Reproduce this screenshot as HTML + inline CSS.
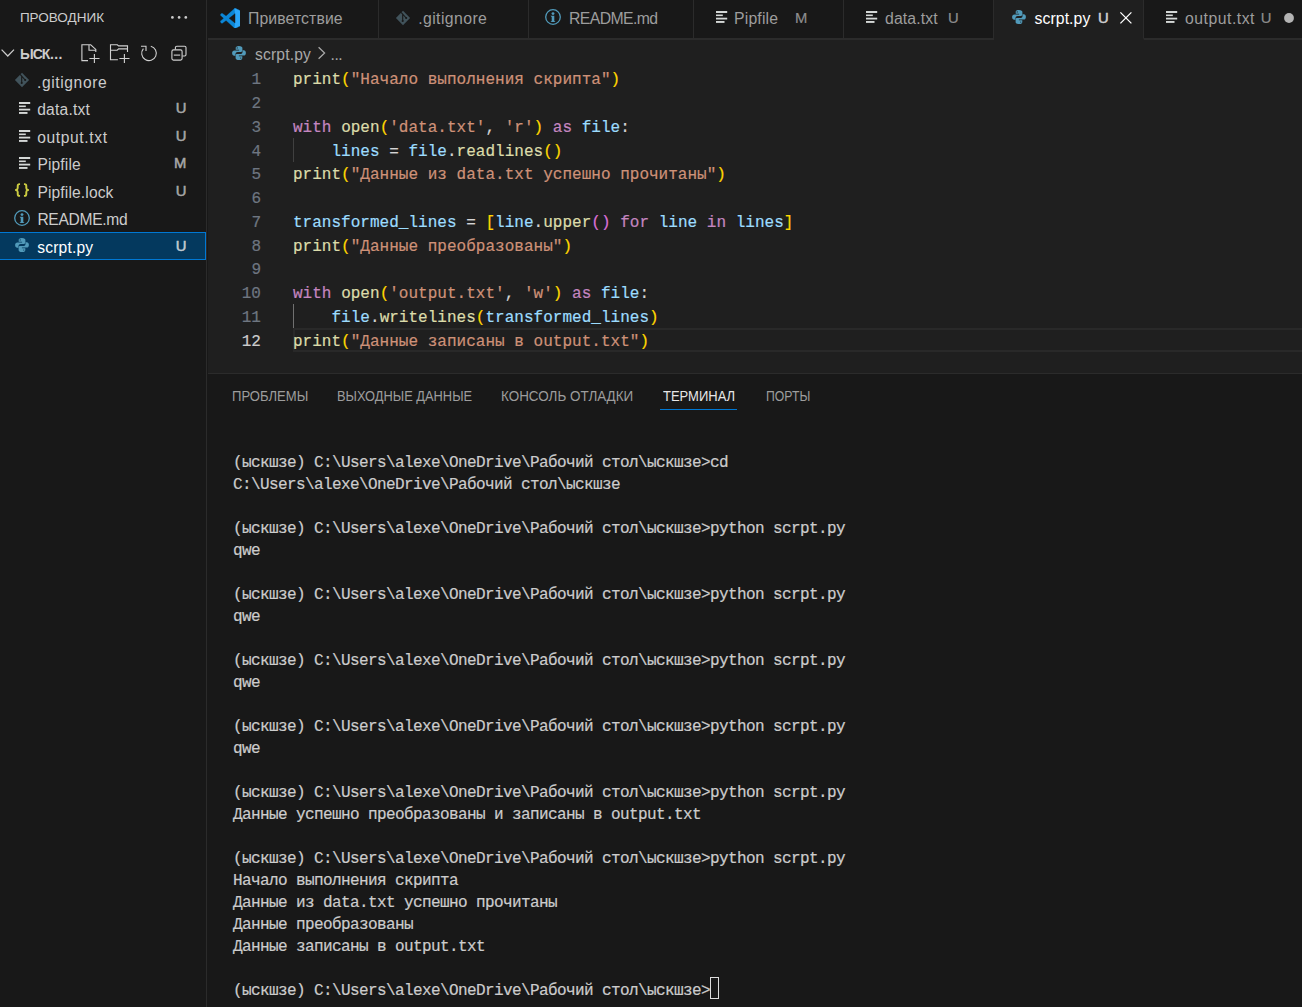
<!DOCTYPE html>
<html lang="ru">
<head>
<meta charset="utf-8">
<title>scrpt.py — ыскшзе — Visual Studio Code</title>
<style>
*{box-sizing:border-box;margin:0;padding:0}
html,body{width:1302px;height:1007px;overflow:hidden;background:#181818}
body{position:relative;font-family:"Liberation Sans",sans-serif;color:#ccc;font-size:16.25px}
.abs{position:absolute}
#side{position:absolute;left:0;top:0;width:207px;height:1007px;background:#181818;border-right:1px solid #2b2b2b}
#side .title{position:absolute;left:19.9px;top:9.4px;font-size:13.5px;line-height:18px;color:#ccc;letter-spacing:0px;white-space:nowrap}
#side .sect{position:absolute;left:20px;top:44.8px;font-size:14px;letter-spacing:-1px;font-weight:bold;line-height:18px;color:#ccc;white-space:nowrap}
.row{position:absolute;left:0;width:206px;height:27.5px;line-height:27.5px}
.row .nm{position:absolute;left:37px;top:1.5px;font-size:15.6px;color:#ccc;white-space:nowrap}
.row .bd{position:absolute;right:19.6px;top:.6px;font-size:14.8px;color:#a8a8a8;-webkit-text-stroke:.5px #a8a8a8;text-align:center}
.row.sel{background:#04395e;box-shadow:inset 0 1px #0078d4,inset 0 -1px #0078d4,inset -1px 0 #0078d4;height:28px}
.row.sel .nm{color:#fff}
.row.sel .bd{color:#c4ccd2;-webkit-text-stroke-color:#c4ccd2}
#tabs{position:absolute;left:208px;top:0;width:1094px;height:40px;background:#181818;border-bottom:2px solid #2b2b2b;z-index:2}
.tab{position:absolute;top:0;height:40px;border-right:1px solid #2b2b2b;line-height:34px;font-size:15.8px;color:#9d9d9d;white-space:nowrap;border-bottom:2px solid #2b2b2b}
.tab.act{background:#1f1f1f;color:#fff;border-bottom:2px solid #1f1f1f}
.tab .lb,.tab .tb{position:absolute;top:1.8px}
.tab .tb{font-size:14.8px;top:.7px !important;margin-left:-.6px;color:#8e8e8e;-webkit-text-stroke:.2px #8e8e8e}
.tab.act .tb{color:#d0d0d0;-webkit-text-stroke:.5px #d0d0d0}
#ed{position:absolute;left:208px;top:39px;width:1094px;height:334px;background:#1f1f1f}
#bc{position:absolute;left:0;top:0;height:27.5px;line-height:28px;font-size:15.6px;color:#a9a9a9;white-space:nowrap}
#bc span{top:1.9px}
.ln{position:absolute;left:0;width:1094px;height:23.75px;line-height:23.75px;font-family:"Liberation Mono","DejaVu Sans Mono",monospace;font-size:16px;letter-spacing:0.02px;white-space:pre;-webkit-text-stroke:.2px}
.ln .n{position:absolute;left:0;top:2.9px;width:53px;text-align:right;color:#6e7681}
.ln .c{position:absolute;left:85px;top:2.9px;color:#d4d4d4}
.curline{position:absolute;left:85px;width:1012px;height:24px;border:2px solid #292929}
.ln.cur .n{color:#ccc}
.f{color:#dcdcaa}.s{color:#ce9178}.k{color:#c586c0}.v{color:#9cdcfe}.b1{color:#ffd700}.b2{color:#da70d6}
.guide{position:absolute;left:85px;width:1.25px;background:#404040}
#panel{position:absolute;left:208px;top:373px;width:1094px;height:634px;background:#181818;border-top:1px solid #2b2b2b}
.pt{position:absolute;display:inline-block;transform-origin:0 0;top:13.3px;font-size:14px;line-height:18px;color:#9d9d9d;white-space:nowrap}
.pt.act{color:#e7e7e7}
.ul{position:absolute;left:452px;width:77px;top:35px;height:1px;background:#0078d4}
.tl{position:absolute;left:25px;height:22px;line-height:24px;padding-top:1.6px;font-family:"Liberation Mono","DejaVu Sans Mono",monospace;font-size:16px;letter-spacing:-0.602px;color:#ccc;white-space:pre;-webkit-text-stroke:.2px}
.cursor{position:absolute;top:0;width:9px;height:22px;border:1px solid #dcdcdc;margin-left:.3px}

</style>
</head>
<body>
<div id="side">
<div class="title">ПРОВОДНИК</div>
<svg class="abs" style="left:170px;top:14px" width="18" height="6" viewBox="0 0 18 6" fill="#ccc"><circle cx="2.4" cy="3.4" r="1.35"/><circle cx="9.1" cy="3.4" r="1.35"/><circle cx="15.8" cy="3.4" r="1.35"/></svg>
<svg class="abs" style="left:0px;top:48.4px" width="16" height="10" viewBox="0 0 16 10"><path d="M1.6 1.6 7.8 8 14 1.6" fill="none" stroke="#ccc" stroke-width="1.25"/></svg>
<div class="sect">ЫСК<span style="letter-spacing:.45px;margin-left:.5px">...</span></div>
<svg class="abs" style="left:76px;top:38px" width="118" height="30" viewBox="76 38 118 30" fill="none" stroke="#d0d0d0" stroke-width="1.12"><path d="M88 60.6H81.9V44.8H90.7L95.8 49.4V51.9M89 44.8V50.2H95.8"/><path d="M89.4 58.5H99.5M94.4 53.9V63.1"/><path d="M117.9 59.8H110.5V44.8H117.3L118.6 45.9H127.5V51.9M110.5 50.2H117.2L118.6 48.9H127.5"/><path d="M119.4 58.5H129.5M124.4 53.9V63.1"/><path d="M150.8 46.2A7.3 7.3 0 1 1 143.4 48.6"/><path d="M141 46.2H146V51"/><rect x="171.9" y="49.9" width="10.2" height="10.2" rx="1.6"/><path d="M173.8 55.1H180.2" /><path d="M175.4 49.6V47.6Q175.4 46.2 176.8 46.2H184.6Q186 46.2 186 47.6V54.6Q186 56 184.6 56H182.4"/></svg>
<div class="row" style="top:67.25px"><svg class="abs" style="left:13.8px;top:5px" width="16" height="16" viewBox="-8 -8 16 16"><path d="M0-7.2 7.1 0 0 7.2-7.1 0Z" fill="#41535b"/><path d="M-1.9-5.6 3.2 0M-.3-3.6V3" stroke="#181818" stroke-width="1.1" fill="none"/><circle cx="3.2" cy="0" r="1.05" fill="#181818"/><circle cx="-.3" cy="3" r="1.05" fill="#181818"/></svg><span class="nm" style="left:37.0px;letter-spacing:0.611px">.gitignore</span></div>
<div class="row" style="top:94.75px"><svg class="abs" style="left:19px;top:7.4px" width="12" height="13" viewBox="0 0 12 13"><rect x="0" y="0" width="11.2" height="2" fill="#d4d7d6"/><rect x="0" y="3.5" width="6.8" height="1.6" fill="#d4d7d6"/><rect x="0" y="6.7" width="11.2" height="1.8" fill="#d4d7d6"/><rect x="0" y="10" width="8.5" height="1.9" fill="#d4d7d6"/></svg><span class="nm" style="left:37.2px;letter-spacing:0.214px">data.txt</span><span class="bd">U</span></div>
<div class="row" style="top:122.25px"><svg class="abs" style="left:19px;top:7.4px" width="12" height="13" viewBox="0 0 12 13"><rect x="0" y="0" width="11.2" height="2" fill="#d4d7d6"/><rect x="0" y="3.5" width="6.8" height="1.6" fill="#d4d7d6"/><rect x="0" y="6.7" width="11.2" height="1.8" fill="#d4d7d6"/><rect x="0" y="10" width="8.5" height="1.9" fill="#d4d7d6"/></svg><span class="nm" style="left:37.2px;letter-spacing:0.632px">output.txt</span><span class="bd">U</span></div>
<div class="row" style="top:149.75px"><svg class="abs" style="left:19px;top:7.4px" width="12" height="13" viewBox="0 0 12 13"><rect x="0" y="0" width="11.2" height="2" fill="#d4d7d6"/><rect x="0" y="3.5" width="6.8" height="1.6" fill="#d4d7d6"/><rect x="0" y="6.7" width="11.2" height="1.8" fill="#d4d7d6"/><rect x="0" y="10" width="8.5" height="1.9" fill="#d4d7d6"/></svg><span class="nm" style="left:37.4px;letter-spacing:0.132px">Pipfile</span><span class="bd">M</span></div>
<div class="row" style="top:177.25px"><svg class="abs" style="left:14.6px;top:5.4px" width="14.6" height="14.2" viewBox="0 0 15 15" preserveAspectRatio="none"><path d="M5.2 1.2H4.6C3.2 1.2 2.8 2 2.8 3.2V5.4C2.8 6.6 2.2 7.2 .9 7.4C2.2 7.6 2.8 8.2 2.8 9.4V11.6C2.8 12.8 3.2 13.6 4.6 13.6H5.2" fill="none" stroke="#cbcb41" stroke-width="2" stroke-linejoin="round"/><path d="M9.2 1.2H9.8C11.2 1.2 11.6 2 11.6 3.2V5.4C11.6 6.6 12.2 7.2 13.5 7.4C12.2 7.6 11.6 8.2 11.6 9.4V11.6C11.6 12.8 11.2 13.6 9.8 13.6H9.2" fill="none" stroke="#cbcb41" stroke-width="2" stroke-linejoin="round"/></svg><span class="nm" style="left:37.4px;letter-spacing:0.136px">Pipfile.lock</span><span class="bd">U</span></div>
<div class="row" style="top:204.75px"><svg class="abs" style="left:12.9px;top:4.2px" width="18" height="18" viewBox="-9 -9 18 18"><circle cx="0" cy="0" r="7.3" fill="none" stroke="#519aba" stroke-width="1.3"/><circle cx="0" cy="-3.4" r="1.45" fill="#519aba"/><path d="M-2.6-1.2H1.3V3.9L2.6 5H-2.6L-1.3 3.9V0Z" fill="#519aba"/></svg><span class="nm" style="left:37.4px;letter-spacing:-0.3px">README.md</span></div>
<div class="row sel" style="top:232px"><svg class="abs" style="left:14px;top:5px" width="16" height="16" viewBox="-8 -8 16 16"><path d="M-.2-7C-2.6-7-3.3-6-3.3-4.9V-3.2H.1V-2.6H-4.6C-6-2.6-6.9-1.5-6.9.1C-6.9 1.8-6 2.8-4.8 2.8H-3.5V1.1C-3.5-.2-2.5-1.1-1.3-1.1H1.9C2.8-1.1 3.4-1.8 3.4-2.7V-4.9C3.4-6 2.4-7-.2-7Z" fill="#519aba"/><path d="M.2 7C2.6 7 3.3 6 3.3 4.9V3.2H-.1V2.6H4.6C6 2.6 6.9 1.5 6.9-.1C6.9-1.8 6-2.8 4.8-2.8H3.5V-1.1C3.5.2 2.5 1.1 1.3 1.1H-1.9C-2.8 1.1-3.4 1.8-3.4 2.7V4.9C-3.4 6-2.4 7 .2 7Z" fill="#519aba"/><circle cx="-1.8" cy="-5.1" r=".55" fill="#04395e"/><circle cx="1.8" cy="5.1" r=".55" fill="#04395e"/></svg><span class="nm" style="left:37.2px;letter-spacing:0.189px">scrpt.py</span><span class="bd">U</span></div>
</div>
<div id="tabs">
<div class="tab" style="left:0px;width:171px"><svg class="abs" style="left:11.7px;top:7.7px" width="20.6" height="20.6" viewBox="0 0 100 100"><path d="M70.9 99.3C72.5 99.9 74.3 99.9 75.9 99.1L96.5 89.2C98.6 88.2 100 86 100 83.6V16.4C100 14 98.6 11.8 96.5 10.8L75.9.9C73.8-.1 71.3.1 69.5 1.4C69.3 1.6 69 1.8 68.8 2.1L29.4 38 12.2 25C10.6 23.8 8.4 23.9 6.9 25.2L1.4 30.3C-.5 31.9-.5 34.8 1.4 36.4L16.2 50 1.4 63.6C-.5 65.2-.5 68.1 1.4 69.7L6.9 74.8C8.4 76.1 10.6 76.2 12.2 75L29.4 62 68.8 97.9C69.4 98.5 70.1 99 70.9 99.3ZM73 27.5 44.5 50 73 72.5V27.5Z" fill="#0b86d6" fill-rule="evenodd"/><path d="M70 .6 75.9.9 96.5 10.8C98.6 11.8 100 14 100 16.4V83.6C100 86 98.6 88.2 96.5 89.2L75.9 99.1 70 99.4 73 72.5V27.5Z" fill="#2aa7fb"/><path d="M70.9 99.3C72.5 99.9 74.3 99.9 75.9 99.1L96.5 89.2C98.6 88.2 100 86 100 83.6V16.4C100 14 98.6 11.8 96.5 10.8L75.9.9C73.8-.1 71.3.1 69.5 1.4C69.3 1.6 69 1.8 68.8 2.1L29.4 38 12.2 25C10.6 23.8 8.4 23.9 6.9 25.2L1.4 30.3C-.5 31.9-.5 34.8 1.4 36.4L16.2 50 1.4 63.6C-.5 65.2-.5 68.1 1.4 69.7L6.9 74.8C8.4 76.1 10.6 76.2 12.2 75L29.4 62 68.8 97.9C69.4 98.5 70.1 99 70.9 99.3ZM73 27.5 44.5 50 73 72.5V27.5Z" fill="none" stroke="#181818" stroke-width="2"/></svg><span class="lb" style="left:40.0px;letter-spacing:0.1px">Приветствие</span></div>
<div class="tab" style="left:171px;width:150px"><svg class="abs" style="left:16.4px;top:9.6px" width="16" height="16" viewBox="-8 -8 16 16"><path d="M0-7.2 7.1 0 0 7.2-7.1 0Z" fill="#41535b"/><path d="M-1.9-5.6 3.2 0M-.3-3.6V3" stroke="#181818" stroke-width="1.1" fill="none"/><circle cx="3.2" cy="0" r="1.05" fill="#181818"/><circle cx="-.3" cy="3" r="1.05" fill="#181818"/></svg><span class="lb" style="left:39.2px;letter-spacing:0.415px">.gitignore</span></div>
<div class="tab" style="left:321px;width:165px"><svg class="abs" style="left:15px;top:8.2px" width="18" height="18" viewBox="-9 -9 18 18"><circle cx="0" cy="0" r="7.3" fill="none" stroke="#519aba" stroke-width="1.3"/><circle cx="0" cy="-3.4" r="1.45" fill="#519aba"/><path d="M-2.6-1.2H1.3V3.9L2.6 5H-2.6L-1.3 3.9V0Z" fill="#519aba"/></svg><span class="lb" style="left:40.0px;letter-spacing:-0.6px">README.md</span></div>
<div class="tab" style="left:486px;width:150px"><svg class="abs" style="left:22px;top:11.4px" width="12" height="13" viewBox="0 0 12 13"><rect x="0" y="0" width="11.2" height="2" fill="#d4d7d6"/><rect x="0" y="3.5" width="6.8" height="1.6" fill="#d4d7d6"/><rect x="0" y="6.7" width="11.2" height="1.8" fill="#d4d7d6"/><rect x="0" y="10" width="8.5" height="1.9" fill="#d4d7d6"/></svg><span class="lb" style="left:40.0px;letter-spacing:0.167px">Pipfile</span><span class="tb" style="left:101.5px">M</span></div>
<div class="tab" style="left:636px;width:150px"><svg class="abs" style="left:21.8px;top:11.4px" width="12" height="13" viewBox="0 0 12 13"><rect x="0" y="0" width="11.2" height="2" fill="#d4d7d6"/><rect x="0" y="3.5" width="6.8" height="1.6" fill="#d4d7d6"/><rect x="0" y="6.7" width="11.2" height="1.8" fill="#d4d7d6"/><rect x="0" y="10" width="8.5" height="1.9" fill="#d4d7d6"/></svg><span class="lb" style="left:41.0px;letter-spacing:0.128px">data.txt</span><span class="tb" style="left:104.6px">U</span></div>
<div class="tab act" style="left:786px;width:150px"><svg class="abs" style="left:17px;top:9.4px" width="16" height="16" viewBox="-8 -8 16 16"><path d="M-.2-7C-2.6-7-3.3-6-3.3-4.9V-3.2H.1V-2.6H-4.6C-6-2.6-6.9-1.5-6.9.1C-6.9 1.8-6 2.8-4.8 2.8H-3.5V1.1C-3.5-.2-2.5-1.1-1.3-1.1H1.9C2.8-1.1 3.4-1.8 3.4-2.7V-4.9C3.4-6 2.4-7-.2-7Z" fill="#519aba"/><path d="M.2 7C2.6 7 3.3 6 3.3 4.9V3.2H-.1V2.6H4.6C6 2.6 6.9 1.5 6.9-.1C6.9-1.8 6-2.8 4.8-2.8H3.5V-1.1C3.5.2 2.5 1.1 1.3 1.1H-1.9C-2.8 1.1-3.4 1.8-3.4 2.7V4.9C-3.4 6-2.4 7 .2 7Z" fill="#519aba"/><circle cx="-1.8" cy="-5.1" r=".55" fill="#1f1f1f"/><circle cx="1.8" cy="5.1" r=".55" fill="#1f1f1f"/></svg><span class="lb" style="left:40.5px;letter-spacing:0.072px">scrpt.py</span><span class="tb" style="left:104.5px">U</span><svg class="abs" style="left:125.2px;top:10.6px" width="14" height="14" viewBox="0 0 14 14"><path d="M1.4 1.4 12.4 12.4M12.4 1.4 1.4 12.4" stroke="#fff" stroke-width="1.3" fill="none"/></svg></div>
<div class="tab" style="left:936px;width:170px"><svg class="abs" style="left:21.8px;top:11.4px" width="12" height="13" viewBox="0 0 12 13"><rect x="0" y="0" width="11.2" height="2" fill="#d4d7d6"/><rect x="0" y="3.5" width="6.8" height="1.6" fill="#d4d7d6"/><rect x="0" y="6.7" width="11.2" height="1.8" fill="#d4d7d6"/><rect x="0" y="10" width="8.5" height="1.9" fill="#d4d7d6"/></svg><span class="lb" style="left:41.0px;letter-spacing:0.5px">output.txt</span><span class="tb" style="left:117.3px">U</span><svg class="abs" style="left:139px;top:12px" width="12" height="12" viewBox="0 0 12 12"><circle cx="6" cy="6" r="4.9" fill="#b4b4b4"/></svg></div>
</div>
<div id="ed">
<div id="bc"><svg class="abs" style="left:23.4px;top:5.7px" width="16" height="16" viewBox="-8 -8 16 16"><path d="M-.2-7C-2.6-7-3.3-6-3.3-4.9V-3.2H.1V-2.6H-4.6C-6-2.6-6.9-1.5-6.9.1C-6.9 1.8-6 2.8-4.8 2.8H-3.5V1.1C-3.5-.2-2.5-1.1-1.3-1.1H1.9C2.8-1.1 3.4-1.8 3.4-2.7V-4.9C3.4-6 2.4-7-.2-7Z" fill="#519aba"/><path d="M.2 7C2.6 7 3.3 6 3.3 4.9V3.2H-.1V2.6H4.6C6 2.6 6.9 1.5 6.9-.1C6.9-1.8 6-2.8 4.8-2.8H3.5V-1.1C3.5.2 2.5 1.1 1.3 1.1H-1.9C-2.8 1.1-3.4 1.8-3.4 2.7V4.9C-3.4 6-2.4 7 .2 7Z" fill="#519aba"/><circle cx="-1.8" cy="-5.1" r=".55" fill="#1f1f1f"/><circle cx="1.8" cy="5.1" r=".55" fill="#1f1f1f"/></svg><span class="abs" style="left:47px;letter-spacing:0.189px">scrpt.py</span><svg class="abs" style="left:108.6px;top:7.2px" width="10" height="14" viewBox="0 0 10 14"><path d="M1.6 1.2 7.6 7 1.6 12.8" fill="none" stroke="#a9a9a9" stroke-width="1.25"/></svg><span class="abs" style="left:122.6px;letter-spacing:-.5px">...</span></div>
<div class="curline" style="top:289px"></div>
<div class="ln" style="top:27.5px"><span class="n">1</span><span class="c"><span class="f">print</span><span class="b1">(</span><span class="s">"Начало выполнения скрипта"</span><span class="b1">)</span></span></div>
<div class="ln" style="top:51.25px"><span class="n">2</span></div>
<div class="ln" style="top:75.0px"><span class="n">3</span><span class="c"><span class="k">with</span> <span class="f">open</span><span class="b1">(</span><span class="s">'data.txt'</span>, <span class="s">'r'</span><span class="b1">)</span> <span class="k">as</span> <span class="v">file</span>:</span></div>
<div class="ln" style="top:98.75px"><span class="n">4</span><span class="c">    <span class="v">lines</span> = <span class="v">file</span>.<span class="f">readlines</span><span class="b1">()</span></span></div>
<div class="ln" style="top:122.5px"><span class="n">5</span><span class="c"><span class="f">print</span><span class="b1">(</span><span class="s">"Данные из data.txt успешно прочитаны"</span><span class="b1">)</span></span></div>
<div class="ln" style="top:146.25px"><span class="n">6</span></div>
<div class="ln" style="top:170.0px"><span class="n">7</span><span class="c"><span class="v">transformed_lines</span> = <span class="b1">[</span><span class="v">line</span>.<span class="f">upper</span><span class="b2">()</span> <span class="k">for</span> <span class="v">line</span> <span class="k">in</span> <span class="v">lines</span><span class="b1">]</span></span></div>
<div class="ln" style="top:193.75px"><span class="n">8</span><span class="c"><span class="f">print</span><span class="b1">(</span><span class="s">"Данные преобразованы"</span><span class="b1">)</span></span></div>
<div class="ln" style="top:217.5px"><span class="n">9</span></div>
<div class="ln" style="top:241.25px"><span class="n">10</span><span class="c"><span class="k">with</span> <span class="f">open</span><span class="b1">(</span><span class="s">'output.txt'</span>, <span class="s">'w'</span><span class="b1">)</span> <span class="k">as</span> <span class="v">file</span>:</span></div>
<div class="ln" style="top:265.0px"><span class="n">11</span><span class="c">    <span class="v">file</span>.<span class="f">writelines</span><span class="b1">(</span><span class="v">transformed_lines</span><span class="b1">)</span></span></div>
<div class="ln cur" style="top:288.75px"><span class="n">12</span><span class="c"><span class="f">print</span><span class="b1">(</span><span class="s">"Данные записаны в output.txt"</span><span class="b1">)</span></span></div>
<div class="guide" style="top:98.75px;height:23.75px"></div>
<div class="guide" style="top:265.0px;height:24.0px;background:#707070"></div>
</div>
<div id="panel">
<span class="pt" style="left:24.1px;transform:scaleX(0.9326)">ПРОБЛЕМЫ</span>
<span class="pt" style="left:128.9px;transform:scaleX(0.9178)">ВЫХОДНЫЕ ДАННЫЕ</span>
<span class="pt" style="left:292.9px;transform:scaleX(0.9609)">КОНСОЛЬ ОТЛАДКИ</span>
<span class="pt act" style="left:454.7px;transform:scaleX(0.9276)">ТЕРМИНАЛ</span>
<span class="pt" style="left:557.6px;transform:scaleX(0.8735)">ПОРТЫ</span>
<div class="ul"></div>
<div class="tl" style="top:75px">(ыскшзе) C:\Users\alexe\OneDrive\Рабочий стол\ыскшзе&gt;cd</div>
<div class="tl" style="top:97px">C:\Users\alexe\OneDrive\Рабочий стол\ыскшзе</div>
<div class="tl" style="top:141px">(ыскшзе) C:\Users\alexe\OneDrive\Рабочий стол\ыскшзе&gt;python scrpt.py</div>
<div class="tl" style="top:163px">qwe</div>
<div class="tl" style="top:207px">(ыскшзе) C:\Users\alexe\OneDrive\Рабочий стол\ыскшзе&gt;python scrpt.py</div>
<div class="tl" style="top:229px">qwe</div>
<div class="tl" style="top:273px">(ыскшзе) C:\Users\alexe\OneDrive\Рабочий стол\ыскшзе&gt;python scrpt.py</div>
<div class="tl" style="top:295px">qwe</div>
<div class="tl" style="top:339px">(ыскшзе) C:\Users\alexe\OneDrive\Рабочий стол\ыскшзе&gt;python scrpt.py</div>
<div class="tl" style="top:361px">qwe</div>
<div class="tl" style="top:405px">(ыскшзе) C:\Users\alexe\OneDrive\Рабочий стол\ыскшзе&gt;python scrpt.py</div>
<div class="tl" style="top:427px">Данные успешно преобразованы и записаны в output.txt</div>
<div class="tl" style="top:471px">(ыскшзе) C:\Users\alexe\OneDrive\Рабочий стол\ыскшзе&gt;python scrpt.py</div>
<div class="tl" style="top:493px">Начало выполнения скрипта</div>
<div class="tl" style="top:515px">Данные из data.txt успешно прочитаны</div>
<div class="tl" style="top:537px">Данные преобразованы</div>
<div class="tl" style="top:559px">Данные записаны в output.txt</div>
<div class="tl" style="top:603px">(ыскшзе) C:\Users\alexe\OneDrive\Рабочий стол\ыскшзе&gt;<span class="cursor"></span></div>
</div>
</body>
</html>
